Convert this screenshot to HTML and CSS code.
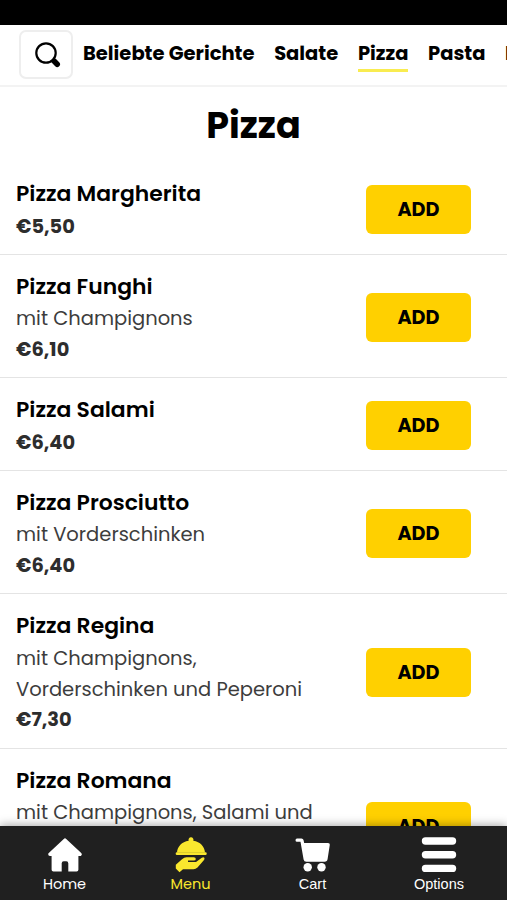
FILE: index.html
```html
<!DOCTYPE html>
<html lang="de">
<head>
<meta charset="utf-8">
<meta name="viewport" content="width=device-width, initial-scale=1">
<title>Pizza</title>
<link rel="stylesheet" href="styles.css">
</head>
<body>
<div class="app">
  <div class="status-bar"></div>
  <header class="top-bar">
    <button class="search" aria-label="Suche">
      <svg width="28" height="28" viewBox="0 0 28 28"><circle cx="12" cy="12" r="9.700" fill="none" stroke="#000" stroke-width="2.200"/><path d="M18.500 18.500l2 2" stroke="#000" stroke-width="2.400"/><path d="M20.300 20.300l2.900 2.900" stroke="#000" stroke-width="5.600" stroke-linecap="round"/></svg>
    </button>
    <nav class="categories">
      <a class="category">Beliebte Gerichte</a>
      <a class="category">Salate</a>
      <a class="category active">Pizza</a>
      <a class="category">Pasta</a>
      <a class="category">Burger</a>
    </nav>
  </header>
  <main class="menu">
    <h1 class="heading">Pizza</h1>
    <section class="dish">
      <div class="info"><h2 class="name">Pizza Margherita</h2><p class="price">€5,50</p></div>
      <button class="add">ADD</button>
    </section>
    <section class="dish">
      <div class="info"><h2 class="name">Pizza Funghi</h2><p class="desc">mit Champignons</p><p class="price">€6,10</p></div>
      <button class="add">ADD</button>
    </section>
    <section class="dish">
      <div class="info"><h2 class="name">Pizza Salami</h2><p class="price">€6,40</p></div>
      <button class="add">ADD</button>
    </section>
    <section class="dish">
      <div class="info"><h2 class="name">Pizza Prosciutto</h2><p class="desc">mit Vorderschinken</p><p class="price">€6,40</p></div>
      <button class="add">ADD</button>
    </section>
    <section class="dish">
      <div class="info"><h2 class="name">Pizza Regina</h2><p class="desc">mit Champignons,<br>Vorderschinken und Peperoni</p><p class="price">€7,30</p></div>
      <button class="add">ADD</button>
    </section>
    <section class="dish last">
      <div class="info"><h2 class="name">Pizza Romana</h2><p class="desc">mit Champignons, Salami und</p></div>
      <button class="add">ADD</button>
    </section>
  </main>
  <footer class="tab-bar">
    <a class="tab">
      <svg class="icon" width="36" height="36" viewBox="0 0 36 36"><path d="M18 3.200L33 17.300H29.600V32.800H6.400V17.300H3z" fill="#fff" stroke="#fff" stroke-width="3.600" stroke-linejoin="round"/><path d="M14.700 35v-8.500q0-2.200 2-2.200h2.600q2 0 2 2.200V35z" fill="#202020"/></svg>
      <span class="label poppins">Home</span>
    </a>
    <a class="tab current">
      <svg class="icon" width="36" height="36" viewBox="0 0 36 36"><path d="M15.700 3.800a2.500 2.500 0 1 1 4.600 0C27.300 4.800 31.500 9.500 32 15.500H4C4.500 9.500 8.700 4.800 15.700 3.800z"/><rect x="2.700" y="15.200" width="31" height="2.800" rx="1.200"/><path d="M2.800 27.800L9 22.300q2.200-2 4.500-2h7.300q2 0 2 1.600t-2 1.600H15v1.600h8l5.800-4.300q1.800-1.100 2.500 0t-.5 2.500L24.500 30.600q-1.800 1.600-4 1.600H10L6.500 35.300L2.800 31.500z"/></svg>
      <span class="label poppins">Menu</span>
    </a>
    <a class="tab">
      <svg class="icon" width="36" height="36" viewBox="0 0 36 36" fill="#fff"><path d="M2 1.500h4.500q1.600 0 2 1.600L9.200 6H33q2 0 1.800 1.700L32.600 22q-.4 2.700-3 2.700H11.300q-2.300 0-2.700-2.300L5.500 4.800H2q-1.500 0-1.500-1.600T2 1.500z"/><circle cx="12.700" cy="30.300" r="4.200"/><circle cx="26.500" cy="30.300" r="4.200"/></svg>
      <span class="label">Cart</span>
    </a>
    <a class="tab">
      <svg class="icon" width="36" height="36" viewBox="0 0 36 36" fill="#fff"><rect x=".8" y=".3" width="34.400" height="7.400" rx="3.700"/><rect x=".8" y="14" width="34.400" height="7.400" rx="3.700"/><rect x=".8" y="27.700" width="34.400" height="7.400" rx="3.700"/></svg>
      <span class="label">Options</span>
    </a>
  </footer>
</div>
</body>
</html>
```
FILE: styles.css
```css
* { box-sizing: border-box; margin: 0; padding: 0; }

body {
  font-family: Poppins, Inter, "Open Sans", sans-serif;
  color: #000;
  background: #fff;
  overflow: hidden;
}

button { font: inherit; border: 0; color: #000; }

.app { height: 900px; display: flex; flex-direction: column; overflow: hidden; }

.status-bar { height: 25px; flex: none; background: #000; }

.top-bar {
  flex: none;
  height: 62px;
  display: flex;
  align-items: flex-start;
  padding: 5px 0 0 19px;
  border-bottom: 2px solid #f3f3f3;
}

.search {
  flex: none;
  width: 54px;
  height: 49px;
  display: flex;
  align-items: center;
  justify-content: center;
  background: #fff;
  border: 2px solid #eee;
  border-radius: 7px;
}

.search svg { margin: 1px 0 0 3px; }

.categories { display: flex; gap: 19.600px; padding-left: 10px; overflow: hidden; }

.category {
  flex: none;
  height: 41.500px;
  line-height: 48px;
  font-size: 19.500px;
  font-weight: 700;
  white-space: nowrap;
  border-bottom: 3px solid transparent;
}

.category.active { border-color: #f9ec50; }

.menu { flex: 1; min-height: 0; overflow: hidden; }

.heading { height: 75px; line-height: 77px; text-align: center; font-size: 36.500px; font-weight: 700; }

.dish {
  display: flex;
  justify-content: space-between;
  align-items: center;
  padding: 15px 36px 11.300px 16px;
  border-bottom: 1px solid #e4e4e4;
}

.name { font-size: 21.900px; line-height: 33.500px; margin-bottom: 1px; font-weight: 600; white-space: nowrap; }

.desc { font-size: 19.500px; line-height: 30.850px; font-weight: 400; color: #3d3d3d; white-space: nowrap; }

.price { font-size: 19.400px; line-height: 30.850px; font-weight: 700; color: #2d2d2d; }

.last { align-items: flex-start; }

.last .add { margin-top: 38.500px; }

.add {
  width: 105px;
  height: 49px;
  border-radius: 6px;
  background: #ffd000;
  font-size: 19.200px;
  font-weight: 700;
}

.tab-bar {
  position: relative;
  flex: none;
  height: 74px;
  display: grid;
  grid-template-columns: 129px 123px 121px 132px;
  background: #202020;
  box-shadow: 0 -1px 9px rgba(0, 0, 0, .35);
}

.tab { display: flex; flex-direction: column; align-items: center; padding-top: 11px; color: #fff; }

.icon { flex: none; }

.label { font-family: "Liberation Sans", sans-serif; font-size: 14.500px; line-height: 22px; }

.poppins { font-family: Poppins, Inter, sans-serif; }

.current { color: #f9e72e; fill: #f9e72e; }
```
